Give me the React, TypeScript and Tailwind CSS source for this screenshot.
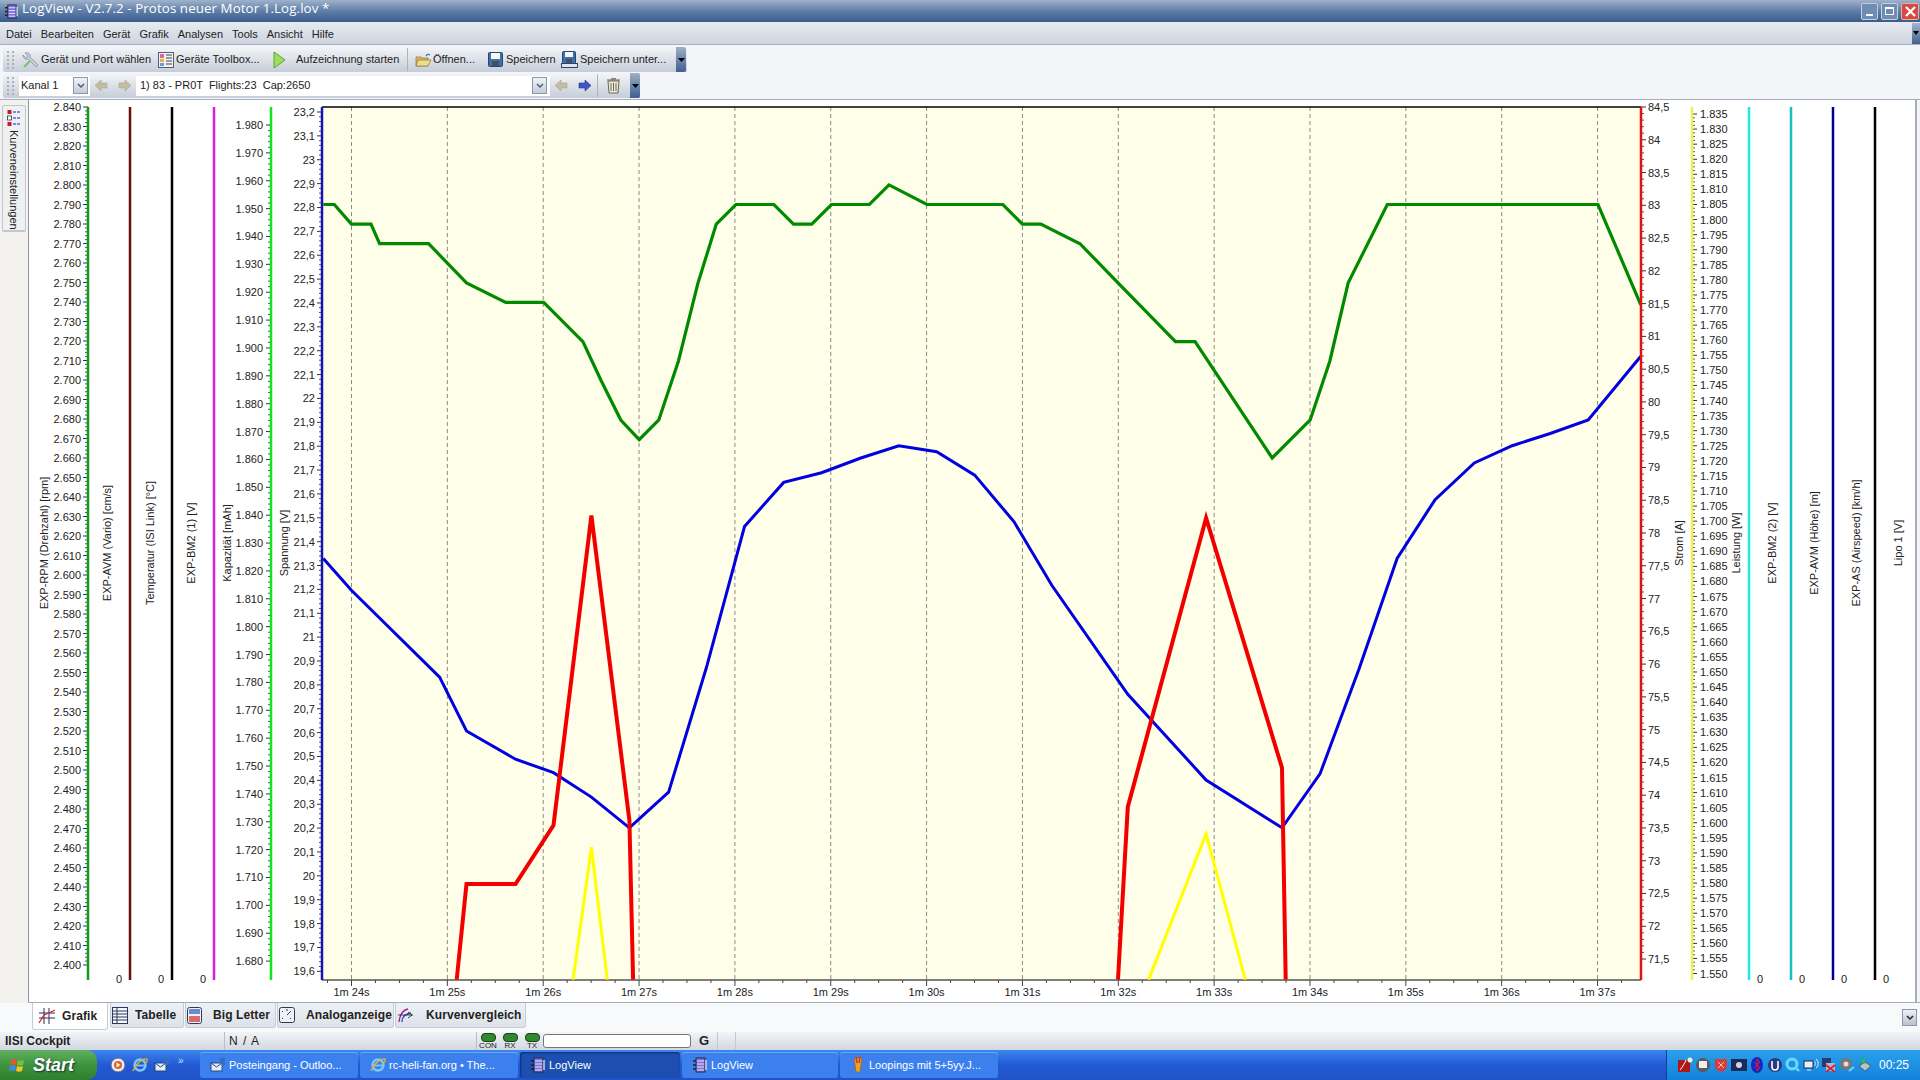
import type { ReactNode } from "react";

// display coords from the screenshot preview -> 1920 wide page
const S = 1920 / 1568;
const pts = (list: number[][]) => list.map(([x, y]) => `${(x * S).toFixed(1)},${(y * S).toFixed(1)}`).join(" ");

const green = [[264,167],[273,167],[287,183],[303,183],[310,199],[350,199],[381,231],[413,247],[444,247],[476,279],[491,311],[507,343],[522,359],[538,343],[554,295],[570,231],[585,183],[601,167],[632,167],[648,183],[663,183],[679,167],[710,167],[726,151],[757,167],[819,167],[835,183],[850,183],[882,199],[913,231],[960,279],[976,279],[1039,374],[1070,343],[1086,295],[1101,231],[1133,167],[1305,167],[1340,249]];
const blue = [[264,456],[287,482],[359,553],[381,597],[421,620],[452,631],[483,651],[514,676],[546,647],[577,545],[608,430],[640,394],[671,386],[703,374],[734,364],[765,369],[796,388],[828,426],[859,478],[921,567],[985,637],[1047,676],[1078,632],[1110,546],[1141,456],[1172,408],[1204,378],[1235,364],[1266,354],[1297,343],[1340,291]];
const red1 = [[373,800],[381,722],[421,722],[452,674],[483,421],[514,670],[517,800]];
const red2 = [[913,800],[921,659],[985,423],[1047,627],[1050,800]];
const yellow1 = [[468,800],[483,692],[496,800]];
const yellow2 = [[938,800],[985,681],[1017,800]];

const TOP = 107;
const BOTTOM = 980;

type Axis = {
  x: number;
  color: string;
  labels: { y: number; text: string }[];
  side: "left" | "right";
  minor?: number;
  tickLen?: number;
  labelGap?: number;
};

function thousands(from: number, to: number, step: number, y0: number, dy: number) {
  const out: { y: number; text: string }[] = [];
  for (let v = from, i = 0; v >= to; v -= step, i++) {
    out.push({ y: y0 + i * dy, text: (v / 1000).toFixed(3) });
  }
  return out;
}

function commas(from: number, to: number, step: number, y0: number, dy: number) {
  const out: { y: number; text: string }[] = [];
  for (let v = from, i = 0; v >= to; v -= step, i++) {
    out.push({ y: y0 + i * dy, text: String(v / 10).replace(".", ",") });
  }
  return out;
}

const axes: Axis[] = [
  { x: 88, color: "#119a22", side: "left", labels: thousands(2840, 2400, 10, 107, 19.5), minor: 4, labelGap: 7 },
  { x: 130, color: "#6b0f0f", side: "left", labels: [{ y: 979, text: "0" }], labelGap: 8, tickLen: 0 },
  { x: 172, color: "#000000", side: "left", labels: [{ y: 979, text: "0" }], labelGap: 8, tickLen: 0 },
  { x: 214, color: "#d522d8", side: "left", labels: [{ y: 979, text: "0" }], labelGap: 8, tickLen: 0 },
  { x: 271, color: "#13e324", side: "left", labels: thousands(1980, 1680, 10, 125, 27.87), minor: 4, labelGap: 8 },
  { x: 322, color: "#1414b4", side: "left", labels: commas(232, 196, 1, 112, 23.87), minor: 4, labelGap: 7 },
  { x: 1641, color: "#e01212", side: "right", labels: commas(845, 715, 5, 107, 32.77), minor: 4, labelGap: 7 },
  { x: 1692, color: "#f2ee4a", side: "right", labels: thousands(1835, 1550, 5, 114, 15.08), minor: 3, labelGap: 8 },
  { x: 1749, color: "#1ce8e8", side: "right", labels: [{ y: 979, text: "0" }], labelGap: 8, tickLen: 0 },
  { x: 1791, color: "#14c0c4", side: "right", labels: [{ y: 979, text: "0" }], labelGap: 8, tickLen: 0 },
  { x: 1833, color: "#000088", side: "right", labels: [{ y: 979, text: "0" }], labelGap: 8, tickLen: 0 },
  { x: 1875, color: "#000000", side: "right", labels: [{ y: 979, text: "0" }], labelGap: 8, tickLen: 0 },
];

const titles: [number, string][] = [
  [44, "EXP-RPM (Drehzahl) [rpm]"],
  [107, "EXP-AVM (Vario) [cm/s]"],
  [150, "Temperatur (ISI Link) [°C]"],
  [191, "EXP-BM2 (1) [V]"],
  [227, "Kapazität [mAh]"],
  [284, "Spannung [V]"],
  [1679, "Strom [A]"],
  [1736, "Leistung [W]"],
  [1772, "EXP-BM2 (2) [V]"],
  [1814, "EXP-AVM (Höhe) [m]"],
  [1856, "EXP-AS (Airspeed) [km/h]"],
  [1898, "Lipo 1 [V]"],
];

const times = ["1m 24s","1m 25s","1m 26s","1m 27s","1m 28s","1m 29s","1m 30s","1m 31s","1m 32s","1m 33s","1m 34s","1m 35s","1m 36s","1m 37s"];
const gridX = (i: number) => 351.5 + i * 95.85;

function AxisLines({ axis }: { axis: Axis }) {
  const dir = axis.side === "left" ? -1 : 1;
  const ticks: ReactNode[] = [];
  const tickLen = axis.tickLen ?? 5;
  if (tickLen > 0) {
    axis.labels.forEach((l, i) => {
      ticks.push(<line key={`M${i}`} x1={axis.x} x2={axis.x + dir * tickLen} y1={l.y} y2={l.y} stroke="#333" />);
      const next = axis.labels[i + 1];
      if (next && axis.minor) {
        for (let m = 1; m <= axis.minor; m++) {
          const y = l.y + ((next.y - l.y) * m) / (axis.minor + 1);
          ticks.push(<line key={`m${i}-${m}`} x1={axis.x} x2={axis.x + dir * 3} y1={y} y2={y} stroke="#555" />);
        }
      }
    });
  }
  return (
    <g>
      {ticks}
      <line x1={axis.x} x2={axis.x} y1={TOP} y2={BOTTOM} stroke={axis.color} strokeWidth={2.5} />
      {axis.labels.map((l) => (
        <text
          key={l.text + l.y}
          x={axis.x + dir * (axis.labelGap ?? 7)}
          y={l.y}
          textAnchor={axis.side === "left" ? "end" : "start"}
          dominantBaseline="central"
          className="text-[11px] fill-[#222]"
        >
          {l.text}
        </text>
      ))}
    </g>
  );
}

function Chart() {
  const timeTicks: ReactNode[] = [];
  for (let i = -1; i < 14; i++) {
    for (let m = 0; m < 4; m++) {
      const x = gridX(i) + (m * 95.85) / 4;
      if (x < 322 || x > 1641) continue;
      timeTicks.push(<line key={`${i}-${m}`} x1={x} x2={x} y1={BOTTOM} y2={BOTTOM + (m === 0 ? 6 : 3)} stroke="#444" />);
    }
  }
  return (
    <svg width={1889} height={903} viewBox="28 100 1889 903" className="block bg-white">
      <rect x={322} y={TOP} width={1319} height={BOTTOM - TOP} fill="#fffee8" />
      {times.map((t, i) => (
        <g key={t}>
          <line x1={gridX(i)} x2={gridX(i)} y1={TOP} y2={BOTTOM} stroke="#8a8a8a" strokeDasharray="4 3" />
          <text x={gridX(i)} y={992} textAnchor="middle" dominantBaseline="central" className="text-[11px] fill-[#222]">{t}</text>
        </g>
      ))}
      <line x1={322} x2={1641} y1={TOP} y2={TOP} stroke="#000" strokeWidth={1.5} />
      <line x1={322} x2={1641} y1={BOTTOM} y2={BOTTOM} stroke="#000" />
      {timeTicks}
      <polyline points={pts(yellow1)} fill="none" stroke="#ffff00" strokeWidth={3} />
      <polyline points={pts(yellow2)} fill="none" stroke="#ffff00" strokeWidth={3} />
      <polyline points={pts(green)} fill="none" stroke="#008a00" strokeWidth={3.2} />
      <polyline points={pts(blue)} fill="none" stroke="#0000e0" strokeWidth={3} />
      <polyline points={pts(red1)} fill="none" stroke="#f20000" strokeWidth={4} />
      <polyline points={pts(red2)} fill="none" stroke="#f20000" strokeWidth={4} />
      {axes.map((a) => (
        <AxisLines key={a.x} axis={a} />
      ))}
      {titles.map(([x, t]) => (
        <text key={t} transform={`rotate(-90 ${x} 543)`} x={x} y={543} textAnchor="middle" dominantBaseline="central" className="text-[11px] fill-[#222]">
          {t}
        </text>
      ))}
      <line x1={28.5} x2={28.5} y1={100} y2={1003} stroke="#8d96a6" />
      <line x1={1916} x2={1916} y1={100} y2={1003} stroke="#a8adb5" strokeWidth={2} />
    </svg>
  );
}

function Grip() {
  return (
    <svg width={9} height={20} viewBox="0 0 9 20" className="shrink-0">
      {[2, 6, 10, 14, 18].map((y) => (
        <g key={y}>
          <rect x={1} y={y - 1} width={2} height={2} fill="#a9b1bf" />
          <rect x={6} y={y - 1} width={2} height={2} fill="#a9b1bf" />
        </g>
      ))}
    </svg>
  );
}

function Chevron({ h }: { h: string }) {
  return (
    <div className={`w-[10px] ${h} bg-gradient-to-b from-[#9fb0c8] to-[#3f5f90] flex items-center justify-center shrink-0 rounded-r-[2px]`}>
      <svg width={7} height={4} viewBox="0 0 7 4"><path d="M0 0h7L3.5 4z" fill="#000" /></svg>
    </div>
  );
}

function DropBtn() {
  return (
    <div className="w-[15px] h-[17px] border border-[#8a97ad] bg-gradient-to-b from-[#f0f3f8] to-[#c5ccd9] flex items-center justify-center shrink-0">
      <svg width={8} height={5} viewBox="0 0 8 5"><path d="M1 1l3 3 3-3" fill="none" stroke="#4a5670" strokeWidth={1.4} /></svg>
    </div>
  );
}

function ArrowIcon({ left, active }: { left?: boolean; active?: boolean }) {
  const fill = active ? "#3f55c8" : "#c4bca0";
  return (
    <svg width={15} height={15} viewBox="0 0 15 15" className="shrink-0">
      <path d={left ? "M1 7.5L7 2v3h6v5H7v3z" : "M14 7.5L8 2v3H2v5h6v3z"} fill={fill} stroke={active ? "#27308a" : "#aaa58e"} strokeWidth={0.6} />
    </svg>
  );
}

function WrenchIcon() {
  return (
    <svg width={18} height={18} viewBox="0 0 18 18" className="shrink-0">
      <path d="M3 2l3 3-1 2-2-1L1 4c0 3 2 5 5 4l8 8 2-2-8-8c1-3-2-5-5-4z" fill="#c9ced6" stroke="#7a8aa0" strokeWidth={0.7} />
      <path d="M2 16l6-6" stroke="#7fc46f" strokeWidth={2.4} />
    </svg>
  );
}

function ToolboxIcon() {
  return (
    <svg width={16} height={16} viewBox="0 0 16 16" className="shrink-0">
      <rect x={0.5} y={0.5} width={15} height={15} fill="#f2f2f2" stroke="#5a5a7a" />
      <rect x={2} y={2} width={4} height={4} fill="#d96a9a" />
      <rect x={2} y={7} width={4} height={3} fill="#e8b040" />
      <rect x={2} y={11} width={4} height={3} fill="#6a9ad9" />
      <path d="M8 3h6M8 6h6M8 9h6M8 12h6" stroke="#444" />
    </svg>
  );
}

function OpenIcon() {
  return (
    <svg width={18} height={16} viewBox="0 0 18 16" className="shrink-0">
      <path d="M1 5h5l1 1h6v8H1z" fill="#d8b95a" stroke="#8a7230" strokeWidth={0.7} />
      <path d="M3 8h13l-3 6H1z" fill="#f0dc8a" stroke="#8a7230" strokeWidth={0.7} />
      <path d="M11 4c1-2 3-2 4-1" fill="none" stroke="#4a70a8" strokeWidth={1.2} />
    </svg>
  );
}

function SaveIcon() {
  return (
    <svg width={15} height={15} viewBox="0 0 15 15" className="shrink-0">
      <rect x={0.5} y={0.5} width={14} height={14} rx={1} fill="#3f6fb0" stroke="#26466f" />
      <rect x={3} y={1} width={9} height={6} fill="#f4f6fa" />
      <rect x={4} y={9} width={7} height={5} fill="#4a4f58" />
    </svg>
  );
}

function SaveAsIcon() {
  return (
    <svg width={17} height={17} viewBox="0 0 17 17" className="shrink-0">
      <rect x={1.5} y={0.5} width={13} height={12} rx={1} fill="#3f6fb0" stroke="#26466f" />
      <rect x={4} y={1} width={8} height={5} fill="#f4f6fa" />
      <rect x={5} y={8} width={6} height={4} fill="#4a4f58" />
      <rect x={0.5} y={12.5} width={16} height={4} fill="#dfe3ea" stroke="#26466f" />
    </svg>
  );
}

function TrashIcon() {
  return (
    <svg width={15} height={17} viewBox="0 0 15 17" className="shrink-0">
      <path d="M2 4h11l-1 12H3z" fill="#f0ead8" stroke="#6a6658" />
      <path d="M1 3h13M5 6v8M7.5 6v8M10 6v8" stroke="#6a6658" />
      <rect x={5} y={1} width={5} height={2} fill="#8a8678" />
    </svg>
  );
}

function LogViewIcon({ size = 16 }: { size?: number }) {
  return (
    <svg width={size} height={size} viewBox="0 0 16 16" className="shrink-0">
      <rect x={4} y={1} width={9} height={14} fill="#7c72d8" stroke="#2a2a50" />
      <path d="M5 4h7M5 7h7M5 10h7M5 13h7" stroke="#e8e4ff" />
      <path d="M1 4h3M1 8h3M1 12h3" stroke="#222" strokeWidth={1.6} />
      <path d="M14 3v10" stroke="#ddd" strokeWidth={1.4} />
    </svg>
  );
}

function MailIcon() {
  return (
    <svg width={16} height={16} viewBox="0 0 16 16" className="shrink-0">
      <rect x={1} y={6} width={11} height={8} fill="#e8eef8" stroke="#244a80" />
      <path d="M1 6l5.5 4L12 6" fill="none" stroke="#244a80" />
      <path d="M9 1h6v7h-3z" fill="#2f70c0" />
    </svg>
  );
}

function IeIcon() {
  return (
    <svg width={16} height={16} viewBox="0 0 16 16" className="shrink-0">
      <ellipse cx={8} cy={8} rx={5.5} ry={5.5} fill="none" stroke="#7cc8f8" strokeWidth={2.4} />
      <path d="M3 8.5h10" stroke="#7cc8f8" strokeWidth={1.8} />
      <path d="M1 14C4 6 11 1 15 2c1 2-1 4-2 5" fill="none" stroke="#e8b030" strokeWidth={1.3} />
    </svg>
  );
}

function WmpIcon() {
  return (
    <svg width={16} height={16} viewBox="0 0 16 16" className="shrink-0">
      <circle cx={8} cy={8} r={7} fill="#e8edf6" stroke="#5a6a88" />
      <circle cx={8} cy={8} r={4} fill="#e06020" />
      <path d="M6.5 5.5l4 2.5-4 2.5z" fill="#fff" />
    </svg>
  );
}

function FlagIcon() {
  return (
    <svg width={19} height={19} viewBox="0 0 19 19" className="shrink-0">
      <path d="M2 4c2-1 4-1 6 0l-1 5c-2-1-4-1-6 0z" fill="#e8552a" />
      <path d="M9 4c2 1 4 1 6 0l-1 5c-2 1-4 1-6 0z" fill="#7cc040" />
      <path d="M1 10c2-1 4-1 6 0l-1 5c-2-1-4-1-6 0z" fill="#3f8ce8" />
      <path d="M8 10c2 1 4 1 6 0l-1 5c-2 1-4 1-6 0z" fill="#f4c428" />
    </svg>
  );
}

function LoopIcon() {
  return (
    <svg width={16} height={18} viewBox="0 0 16 18" className="shrink-0">
      <path d="M4 2l8 0-2 14-4 0z" fill="#e8a030" stroke="#a85a10" strokeWidth={0.7} />
      <path d="M6 1l1 6M10 1l-1 6" stroke="#d03020" strokeWidth={1.4} />
    </svg>
  );
}

function TabGrid({ kind }: { kind: string }) {
  if (kind === "grafik")
    return (
      <svg width={18} height={18} viewBox="0 0 18 18" className="shrink-0">
        <path d="M6 1v16M11 1v16M1 6h16M1 11h16" stroke="#2a2a60" />
        <path d="M1 16l5-8 5-2 6-3" fill="none" stroke="#e02020" strokeWidth={1.2} />
      </svg>
    );
  if (kind === "tabelle")
    return (
      <svg width={16} height={17} viewBox="0 0 16 17" className="shrink-0">
        <rect x={0.5} y={0.5} width={15} height={16} fill="#f6f8fb" stroke="#2a3a5a" />
        <path d="M1 4h14M1 7h14M1 10h14M1 13h14M5 1v15" stroke="#2a3a5a" />
      </svg>
    );
  if (kind === "big")
    return (
      <svg width={15} height={17} viewBox="0 0 15 17" className="shrink-0">
        <rect x={0.5} y={0.5} width={14} height={16} rx={2} fill="#eef2f8" stroke="#2a3a5a" />
        <rect x={2} y={2} width={11} height={5} fill="#6a8ad0" />
        <rect x={2} y={9} width={11} height={6} fill="#e06a6a" />
      </svg>
    );
  if (kind === "analog")
    return (
      <svg width={16} height={16} viewBox="0 0 16 16" className="shrink-0">
        <rect x={0.5} y={0.5} width={15} height={15} rx={2} fill="#eef2f8" stroke="#2a3a5a" />
        <path d="M3 4l1 1M12 4l-1 1M3 12l1-1M12 12l-1-1M8 2v2M8 8l3-3" stroke="#2a3a5a" />
      </svg>
    );
  return (
    <svg width={17} height={16} viewBox="0 0 17 16" className="shrink-0">
      <path d="M2 15C3 7 6 3 11 2" fill="none" stroke="#a02090" strokeWidth={1.3} />
      <path d="M5 15C5 10 8 7 14 6" fill="none" stroke="#3050d0" strokeWidth={1.3} />
      <path d="M1 8h15M11 5l4 3-4 3" fill="none" stroke="#222" strokeWidth={0.8} />
    </svg>
  );
}

const tabs = [
  { kind: "tabelle", label: "Tabelle", w: "w-[74px]", gap: "gap-[7px]" },
  { kind: "big", label: "Big Letter", w: "w-[91px]", gap: "gap-[11px]" },
  { kind: "analog", label: "Analoganzeige", w: "w-[117px]", gap: "gap-[11px]" },
  { kind: "kurve", label: "Kurvenvergleich", w: "w-[131px]", gap: "gap-[12px]" },
];

function Led({ label }: { label: string }) {
  return (
    <div className="w-[22px] flex flex-col items-center shrink-0">
      <div className="w-[15px] h-[9px] rounded-[4px] bg-[#2f8a2f] border border-[#1d3d1d]" />
      <span className="text-[8px] leading-[8px] text-[#222]">{label}</span>
    </div>
  );
}

function TaskButton({ icon, label, w, active }: { icon: ReactNode; label: string; w: string; active?: boolean }) {
  return (
    <div className={`${w} h-[26px] shrink-0 rounded-[3px] flex items-center gap-[3px] pl-[10px] text-[11px] text-white ${active ? "bg-[#1c4fb0] shadow-[inset_1px_1px_2px_#0d2f78]" : "bg-[#3c80ee] shadow-[inset_0_1px_0_#6aa5f8]"}`}>
      {icon}
      <span className="truncate">{label}</span>
    </div>
  );
}

function TrayIcons() {
  const dot = "w-[16px] h-[16px] shrink-0";
  return (
    <div className="flex items-center gap-[2px]">
      <svg className={dot} viewBox="0 0 16 16"><rect x={1} y={3} width={12} height={12} fill="#b01818" /><path d="M3 13C6 9 8 6 9 3" stroke="#fff" fill="none" /><circle cx={13} cy={3} r={2.5} fill="#f8f0d0" /></svg>
      <svg className={dot} viewBox="0 0 16 16"><circle cx={8} cy={8} r={7} fill="#5a5a5a" /><rect x={4} y={4} width={8} height={7} fill="#eee" /></svg>
      <svg className={dot} viewBox="0 0 16 16"><path d="M2 2h12v7c0 3-3 5-6 6-3-1-6-3-6-6z" fill="#d93a3a" /><path d="M5 5l6 6M11 5l-6 6" stroke="#f4c0c0" /></svg>
      <svg className={dot} viewBox="0 0 16 16"><rect y={2} width={16} height={12} fill="#1a2a5a" /><circle cx={8} cy={8} r={3} fill="#cdd6e8" /></svg>
      <svg className={dot} viewBox="0 0 16 16"><ellipse cx={8} cy={8} rx={6} ry={8} fill="#1426c8" /><path d="M5 5l6 6-3 3V2l3 3-6 6" stroke="#e02020" fill="none" /></svg>
      <svg className={dot} viewBox="0 0 16 16"><circle cx={8} cy={8} r={7} fill="#2a3a80" /><path d="M5 4v6a3 3 0 006 0V4" stroke="#fff" strokeWidth={1.6} fill="none" /></svg>
      <svg className={dot} viewBox="0 0 16 16"><circle cx={7} cy={7} r={5} fill="none" stroke="#6ad8f8" strokeWidth={3} /><path d="M10 10l4 4" stroke="#6ad8f8" strokeWidth={2.4} /></svg>
      <svg className={dot} viewBox="0 0 16 16"><rect x={1} y={4} width={9} height={7} fill="#e8eef8" stroke="#1a2a5a" /><path d="M4 13h4M11 4c2 1 2 4 0 5M13 2c3 2 3 7 0 9" stroke="#e8eef8" fill="none" /></svg>
      <svg className={dot} viewBox="0 0 16 16"><rect x={1} y={1} width={9} height={9} fill="#2a3a70" /><rect x={5} y={6} width={9} height={8} fill="#a8b8e0" /><path d="M5 8l9 7M14 8l-9 7" stroke="#e02020" strokeWidth={1.6} /></svg>
      <svg className={dot} viewBox="0 0 16 16"><circle cx={7} cy={7} r={6} fill="#777" /><circle cx={7} cy={7} r={2.5} fill="#ddd" /><path d="M10 14l5-4" stroke="#6ad8f8" strokeWidth={2} /></svg>
      <svg className={dot} viewBox="0 0 16 16"><path d="M2 9l6-4 6 4-6 5z" fill="#b8c0c8" stroke="#333" strokeWidth={0.6} /><path d="M3 4l5-3v6z" fill="#30c030" /></svg>
    </div>
  );
}

export default function App() {
  return (
    <div className="w-[1920px] h-[1080px] overflow-hidden flex flex-col bg-[#f4f5f8] text-[12px] text-[#222] whitespace-nowrap font-['Liberation_Sans',Arial,sans-serif]">
      {/* title bar */}
      <div className="h-[22px] shrink-0 flex items-center bg-gradient-to-b from-[#9fb2ca] via-[#5f7fa8] to-[#395c8c] pl-[4px] pr-[1px] text-white">
        <LogViewIcon size={15} />
        <span className="ml-[3px] -mt-[4px] text-[13.3px] font-['Open_Sans',sans-serif] tracking-[0.1px]">LogView - V2.7.2 - Protos neuer Motor 1.Log.lov *</span>
        <div className="ml-auto flex gap-[3px]">
          <div className="w-[17px] h-[17px] rounded-[2px] border border-[#c4d0e0] bg-[#6f8db2] flex items-end justify-center pb-[3px]"><div className="w-[7px] h-[2px] bg-white" /></div>
          <div className="w-[17px] h-[17px] rounded-[2px] border border-[#c4d0e0] bg-[#6f8db2] flex items-center justify-center"><div className="w-[9px] h-[8px] border border-white border-t-2" /></div>
          <div className="w-[18px] h-[17px] rounded-[2px] border border-[#e4b0a8] bg-[#d84a40] flex items-center justify-center">
            <svg width={11} height={11} viewBox="0 0 11 11"><path d="M1 1l9 9M10 1l-9 9" stroke="#fff" strokeWidth={2.2} /></svg>
          </div>
        </div>
      </div>

      {/* menu */}
      <div className="h-[23px] shrink-0 flex items-center bg-gradient-to-b from-[#e8ebf1] to-[#ced4de] border-b border-[#a6b0c2] pl-[6px] text-[11px] gap-[9px]">
        {["Datei", "Bearbeiten", "Gerät", "Grafik", "Analysen", "Tools", "Ansicht", "Hilfe"].map((m) => (
          <span key={m} className="mt-[2px]">{m}</span>
        ))}
        <div className="ml-auto w-[8px] h-[21px] bg-gradient-to-b from-[#a4b5cc] to-[#41618f] flex items-center justify-center">
          <svg width={6} height={4} viewBox="0 0 6 4"><path d="M0 0h6L3 4z" fill="#000" /></svg>
        </div>
      </div>

      {/* toolbars */}
      <div className="h-[55px] shrink-0 pt-[2px] pl-[3px] flex flex-col gap-[1px] border-b border-[#a6adba] text-[11px]">
        <div className="w-[684px] h-[25px] flex items-center bg-gradient-to-b from-[#f3f5f8] to-[#c6cdd9] rounded-l-[2px]">
          <div className="w-[19px] pl-[3px]"><Grip /></div>
          <div className="w-[136px] flex items-center gap-[1px]"><WrenchIcon /><span>Gerät und Port wählen</span></div>
          <div className="w-[115px] flex items-center gap-[2px]"><ToolboxIcon /><span>Geräte Toolbox...</span></div>
          <div className="w-[23px]">
            <svg width={13} height={18} viewBox="0 0 13 18"><path d="M1 1l11 8-11 8z" fill="#9ce05a" stroke="#5aa03a" /></svg>
          </div>
          <span className="w-[111px]">Aufzeichnung starten</span>
          <div className="w-[1px] h-[23px] bg-[#aab3c2] mr-[7px]" />
          <div className="w-[73px] flex items-center"><OpenIcon /><span>Öffnen...</span></div>
          <div className="w-[73px] flex items-center gap-[3px]"><SaveIcon /><span>Speichern</span></div>
          <div className="w-[115px] flex items-center gap-[2px]"><SaveAsIcon /><span>Speichern unter...</span></div>
          <Chevron h="h-[25px]" />
        </div>
        <div className="w-[637px] h-[25px] flex items-center bg-gradient-to-b from-[#f3f5f8] to-[#c6cdd9] rounded-l-[2px]">
          <div className="w-[16px] pl-[3px]"><Grip /></div>
          <div className="w-[71px] h-[20px] bg-white flex items-center pl-[2px] pr-[2px]">
            <span className="flex-1">Kanal 1</span>
            <DropBtn />
          </div>
          <div className="w-[46px] flex justify-around"><ArrowIcon left /><ArrowIcon /></div>
          <div className="w-[414px] h-[20px] bg-white flex items-center pl-[4px] pr-[3px]">
            <span className="flex-1 whitespace-pre">1) 83 - PR0T  Flights:23  Cap:2650</span>
            <DropBtn />
          </div>
          <div className="w-[46px] flex justify-around"><ArrowIcon left /><ArrowIcon active /></div>
          <div className="w-[1px] h-[23px] bg-[#aab3c2] ml-[1px] mr-[8px]" />
          <div className="w-[24px]"><TrashIcon /></div>
          <Chevron h="h-[25px]" />
        </div>
      </div>

      {/* main */}
      <div className="h-[903px] shrink-0 flex">
        <div className="w-[28px] shrink-0 bg-[#f3f2ee] pl-[2px] pt-[5px]">
          <div className="w-[24px] h-[127px] bg-[#eff0f2] border border-[#c2c6ce] border-b-2 rounded-[2px] flex flex-col items-center pt-[3px]">
            <svg width={15} height={18} viewBox="0 0 15 18">
              <rect x={0.5} y={1} width={4} height={4} fill="#c02020" />
              <rect x={0.5} y={7} width={4} height={4} fill="#fff" stroke="#333" strokeWidth={0.8} />
              <rect x={0.5} y={13} width={4} height={4} fill="#c02020" />
              <path d="M6 3h8M6 9h8M6 15h8" stroke="#1a1ad0" strokeDasharray="3 1" />
            </svg>
            <span className="[writing-mode:vertical-rl] text-[11px] mt-[3px]">Kurveneinstellungen</span>
          </div>
        </div>
        <div className="shrink-0">
          <Chart />
        </div>
      </div>
      <div className="h-[1px] -mt-[1px] bg-[#a6adba] shrink-0 ml-[28px]" />

      {/* tabs */}
      <div className="h-[29px] shrink-0 flex items-start pl-[32px] pr-[3px] bg-[#f8f9fb] font-bold text-[12px] tracking-[0.1px]">
        <div className="w-[76px] h-[27px] bg-white border border-t-0 border-[#c6ccd6] rounded-b-[3px] flex items-center pl-[5px] gap-[6px] mr-[2px]">
          <TabGrid kind="grafik" />
          <span>Grafik</span>
        </div>
        {tabs.map((t) => (
          <div key={t.kind} className={`${t.w} h-[25px] mr-[1px] bg-gradient-to-b from-[#eef1f5] to-[#dde2ea] border border-t-0 border-[#c6ccd6] rounded-b-[3px] flex items-center pl-[1px] ${t.gap}`}>
            <TabGrid kind={t.kind} />
            <span>{t.label}</span>
          </div>
        ))}
        <div className="ml-auto mt-[6px] w-[15px] h-[17px] border border-[#8a97ad] bg-gradient-to-b from-[#eef1f6] to-[#b9c2d0] flex items-center justify-center">
          <svg width={8} height={6} viewBox="0 0 8 6"><path d="M1 1l3 3 3-3" fill="none" stroke="#223" strokeWidth={1.5} /></svg>
        </div>
      </div>

      {/* status bar */}
      <div className="h-[18px] shrink-0 flex items-center bg-gradient-to-b from-[#f2f4f7] to-[#d3d8e0]">
        <div className="w-[225px] pl-[5px] font-bold text-[12px] border-r border-[#b8bfca] h-full flex items-center">IISI Cockpit</div>
        <div className="w-[252px] pl-[4px] border-r border-[#b8bfca] h-full flex items-center tracking-[1px]">N / A</div>
        <Led label="CON" />
        <Led label="RX" />
        <Led label="TX" />
        <div className="w-[148px] h-[14px] bg-white border border-[#777] rounded-[3px]" />
        <div className="w-[26px] text-center font-bold text-[13px]">G</div>
        <div className="w-[19px] h-full border-l border-r border-[#c2c8d2]" />
        <div className="ml-auto w-[12px] h-full" />
      </div>

      {/* taskbar */}
      <div className="flex-1 flex items-center bg-gradient-to-b from-[#3d86ec] via-[#2459d6] to-[#2053c6] text-white">
        <div className="w-[97px] h-full shrink-0 bg-gradient-to-b from-[#62b062] via-[#3c943c] to-[#2f7f2f] rounded-r-[10px] flex items-center pl-[9px] gap-[5px] italic font-bold text-[18px] [text-shadow:1px_1px_2px_#133]">
          <FlagIcon />
          <span>Start</span>
        </div>
        <div className="w-[103px] shrink-0 flex items-center pl-[13px] gap-[6px]">
          <WmpIcon />
          <IeIcon />
          <MailIcon />
          <span className="text-[10px] text-[#cfe0fa] -mt-[10px] ml-[2px]">»</span>
        </div>
        <div className="flex items-center gap-[2px]">
          <TaskButton icon={<MailIcon />} label="Posteingang - Outloo..." w="w-[158px]" />
          <TaskButton icon={<IeIcon />} label="rc-heli-fan.org • The..." w="w-[158px]" />
          <TaskButton icon={<LogViewIcon />} label="LogView" w="w-[160px]" active />
          <TaskButton icon={<LogViewIcon />} label="LogView" w="w-[156px]" />
          <TaskButton icon={<LoopIcon />} label="Loopings mit 5+5yy.J..." w="w-[158px]" />
        </div>
        <div className="ml-auto w-[254px] h-full bg-gradient-to-b from-[#2ba0ec] to-[#1182dc] border-l border-[#0f3f96] flex items-center pl-[10px] gap-[6px]">
          <TrayIcons />
          <span className="text-[12px]">00:25</span>
        </div>
      </div>
    </div>
  );
}
